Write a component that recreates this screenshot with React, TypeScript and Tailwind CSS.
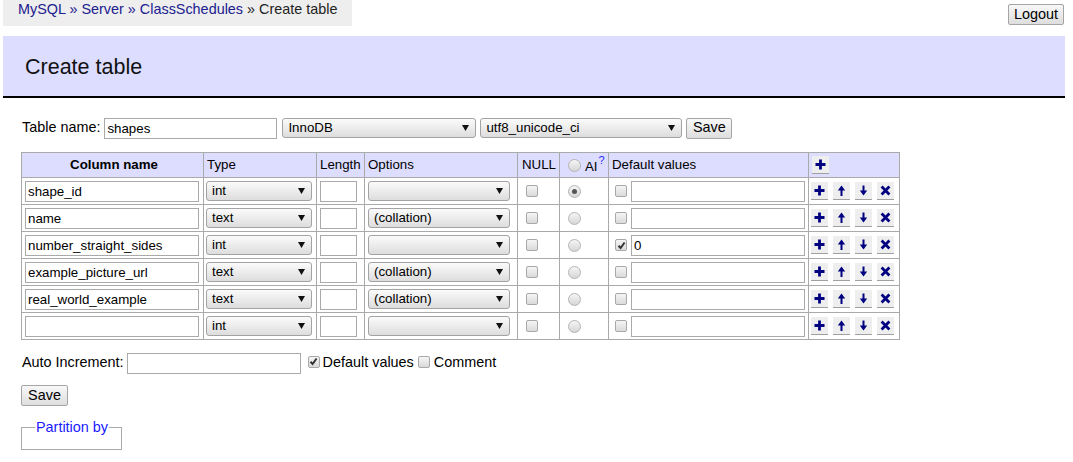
import React from 'react';

type ColumnRow = {
  name: string;
  type: string;
  options: string;
  ai?: boolean;
  hasDefault?: boolean;
  defaultValue?: string;
};

const rows: ColumnRow[] = [
  { name: 'shape_id', type: 'int', options: '', ai: true },
  { name: 'name', type: 'text', options: '(collation)' },
  { name: 'number_straight_sides', type: 'int', options: '', hasDefault: true, defaultValue: '0' },
  { name: 'example_picture_url', type: 'text', options: '(collation)' },
  { name: 'real_world_example', type: 'text', options: '(collation)' },
  { name: '', type: 'int', options: '' },
];

const gridCols = 'grid grid-cols-[182px_113px_48px_153px_42px_49px_200px_91px]';

function FakeSelect({ value, width }: { value: string; width: string }) {
  return (
    <div
      className={`${width} h-[20px] flex items-center justify-between pl-[5px] pr-[6px] rounded-[3px] border border-[#a3a3a3] bg-linear-to-b from-[#fbfbfb] to-[#dddddd] text-[13.3px] text-black`}
    >
      <span>{value}</span>
      <svg width="7" height="6" viewBox="0 0 7 6">
        <polygon points="0,0 7,0 3.5,6" fill="#111" />
      </svg>
    </div>
  );
}

function Checkbox({ checked }: { checked?: boolean }) {
  return (
    <span className="w-[12px] h-[12px] flex items-center justify-center rounded-[2px] border border-[#a8a8a8] bg-linear-to-b from-[#f5f5f5] to-[#dadada]">
      {checked && (
        <svg width="9" height="9" viewBox="0 0 9 9">
          <path d="M1.5 4.8 L3.6 7 L7.6 1.5" fill="none" stroke="#333" strokeWidth="2" />
        </svg>
      )}
    </span>
  );
}

function Radio({ checked }: { checked?: boolean }) {
  return (
    <span className="w-[13px] h-[13px] flex items-center justify-center rounded-full border border-[#b4b4b4] bg-linear-to-b from-[#f5f5f5] to-[#d6d6d6]">
      {checked && <span className="w-[5px] h-[5px] rounded-full bg-[#555]" />}
    </span>
  );
}

function ActionButton({ kind }: { kind: 'add' | 'up' | 'down' | 'del' }) {
  return (
    <span className="w-[17px] h-[18px] flex items-center justify-center bg-[#eeeeee] border-b border-[#a0a0a0]">
      <svg width="17" height="17" viewBox="0 0 17 17">
        {kind === 'add' && (
          <path d="M3.5 8.5H13.5M8.5 3.5V13.5" stroke="#000080" strokeWidth="2.8" fill="none" />
        )}
        {kind === 'up' && (
          <>
            <path d="M8.5 6.5V14" stroke="#000080" strokeWidth="2" fill="none" />
            <polygon points="4.8,8.6 8.5,3.6 12.2,8.6" fill="#000080" />
          </>
        )}
        {kind === 'down' && (
          <>
            <path d="M8.5 3.5V10.5" stroke="#000080" strokeWidth="2" fill="none" />
            <polygon points="4.8,8.4 8.5,13.4 12.2,8.4" fill="#000080" />
          </>
        )}
        {kind === 'del' && (
          <path d="M4.6 4.6L12.4 12.4M12.4 4.6L4.6 12.4" stroke="#000080" strokeWidth="2.8" fill="none" />
        )}
      </svg>
    </span>
  );
}

function GrayButton({ label, className = '' }: { label: string; className?: string }) {
  return (
    <button
      className={`h-[21px] flex items-center justify-center rounded-[2px] border border-[#a5a5a5] bg-linear-to-b from-[#f8f8f8] to-[#dedede] text-[14.4px] text-black ${className}`}
    >
      {label}
    </button>
  );
}

export default function App() {
  const cell = 'border-r border-b border-[#aaaaaa] flex items-center';
  const head = `${cell} h-[25px] bg-[#ddddff] pl-[3px] text-[13.3px]`;
  const body = `${cell} h-[27px] bg-white`;
  const input = 'h-[21px] border border-[#aaaaaa] px-[2px] text-[13.3px] outline-none bg-white';

  return (
    <div className="min-h-screen bg-white font-['Liberation_Sans',Arial,sans-serif] text-black">
      {/* top bar */}
      <div className="flex items-start justify-between">
        <div className="ml-[3px] w-[349px] h-[26px] bg-[#eeeeee] pl-[15px] pt-[1px] text-[14.4px] leading-[17px]">
          <span className="text-[#20208f]">MySQL</span>
          <span className="text-[#20208f]"> » </span>
          <span className="text-[#20208f]">Server</span>
          <span className="text-[#20208f]"> » </span>
          <span className="text-[#20208f]">ClassSchedules</span>
          <span className="text-[#222]"> » Create table</span>
        </div>
        <GrayButton label="Logout" className="mt-[4px] mr-[9px] w-[56px]" />
      </div>

      {/* title band */}
      <div className="mt-[10px] ml-[3px] mr-[8px] h-[62px] bg-[#ddddff] border-b-2 border-black pl-[22px] pt-[19px]">
        <h1 className="text-[21.5px] leading-[24px] text-[#111]">Create table</h1>
      </div>

      <div className="pl-[21px]">
        {/* table name row */}
        <div className="mt-[20px] flex items-center h-[20px] text-[14.4px]">
          <span className="pl-[1px]">Table name:</span>
          <input readOnly value="shapes" className={`ml-[4px] w-[173px] h-[20px] ${input}`} />
          <div className="ml-[5px]">
            <FakeSelect value="InnoDB" width="w-[194px]" />
          </div>
          <div className="ml-[4px]">
            <FakeSelect value="utf8_unicode_ci" width="w-[202px]" />
          </div>
          <GrayButton label="Save" className="ml-[4px] w-[46px] h-[20px]" />
        </div>

        {/* columns table */}
        <div className={`${gridCols} mt-[14px] w-[879px] border-l border-t border-[#aaaaaa]`}>
          <div className={`${head} justify-center pl-0 font-bold`}>Column name</div>
          <div className={head}>Type</div>
          <div className={head}>Length</div>
          <div className={head}>Options</div>
          <div className={`${head} pl-[4px]`}>NULL</div>
          <div className={`${head} pl-[8px] gap-[4px]`}>
            <Radio />
            <span className="pt-[3px]">
              AI
              <span className="relative -top-[7px] ml-[1px] text-[11px] text-[#2a2aff]">?</span>
            </span>
          </div>
          <div className={head}>Default values</div>
          <div className={head}>
            <ActionButton kind="add" />
          </div>

          {rows.map((r, i) => (
            <React.Fragment key={i}>
              <div className={`${body} pl-[3px]`}>
                <input readOnly value={r.name} className={`w-[174px] ${input}`} />
              </div>
              <div className={`${body} pl-[2px]`}>
                <FakeSelect value={r.type} width="w-[106px]" />
              </div>
              <div className={`${body} pl-[3px]`}>
                <input readOnly value="" className={`w-[37px] ${input}`} />
              </div>
              <div className={`${body} pl-[3px]`}>
                <FakeSelect value={r.options} width="w-[142px]" />
              </div>
              <div className={`${body} pl-[8px]`}>
                <Checkbox />
              </div>
              <div className={`${body} pl-[8px]`}>
                <Radio checked={r.ai} />
              </div>
              <div className={`${body} pl-[6px] gap-[4px]`}>
                <Checkbox checked={r.hasDefault} />
                <input readOnly value={r.defaultValue ?? ''} className={`w-[174px] ${input}`} />
              </div>
              <div className={`${body} pl-[2px] gap-[5px]`}>
                <ActionButton kind="add" />
                <ActionButton kind="up" />
                <ActionButton kind="down" />
                <ActionButton kind="del" />
              </div>
            </React.Fragment>
          ))}
        </div>

        {/* auto increment row */}
        <div className="mt-[13px] flex items-center h-[20px] text-[14.4px]">
          <span className="pl-[1px]">Auto Increment:</span>
          <input readOnly value="" className={`ml-[3px] w-[174px] h-[20px] ${input}`} />
          <span className="ml-[7px] -mt-[3px]">
            <Checkbox checked />
          </span>
          <span className="ml-[3px]">Default values</span>
          <span className="ml-[4px] -mt-[3px]">
            <Checkbox />
          </span>
          <span className="ml-[4px]">Comment</span>
        </div>

        <GrayButton label="Save" className="mt-[12px] w-[47px]" />

        <fieldset className="mt-[13px] w-[101px] border border-[#aaaaaa]">
          <legend className="ml-[13px] px-[1px] text-[14.4px] leading-[16px] text-[#1a1aff]">Partition by</legend>
          <div className="h-[14px]" />
        </fieldset>
      </div>
    </div>
  );
}
